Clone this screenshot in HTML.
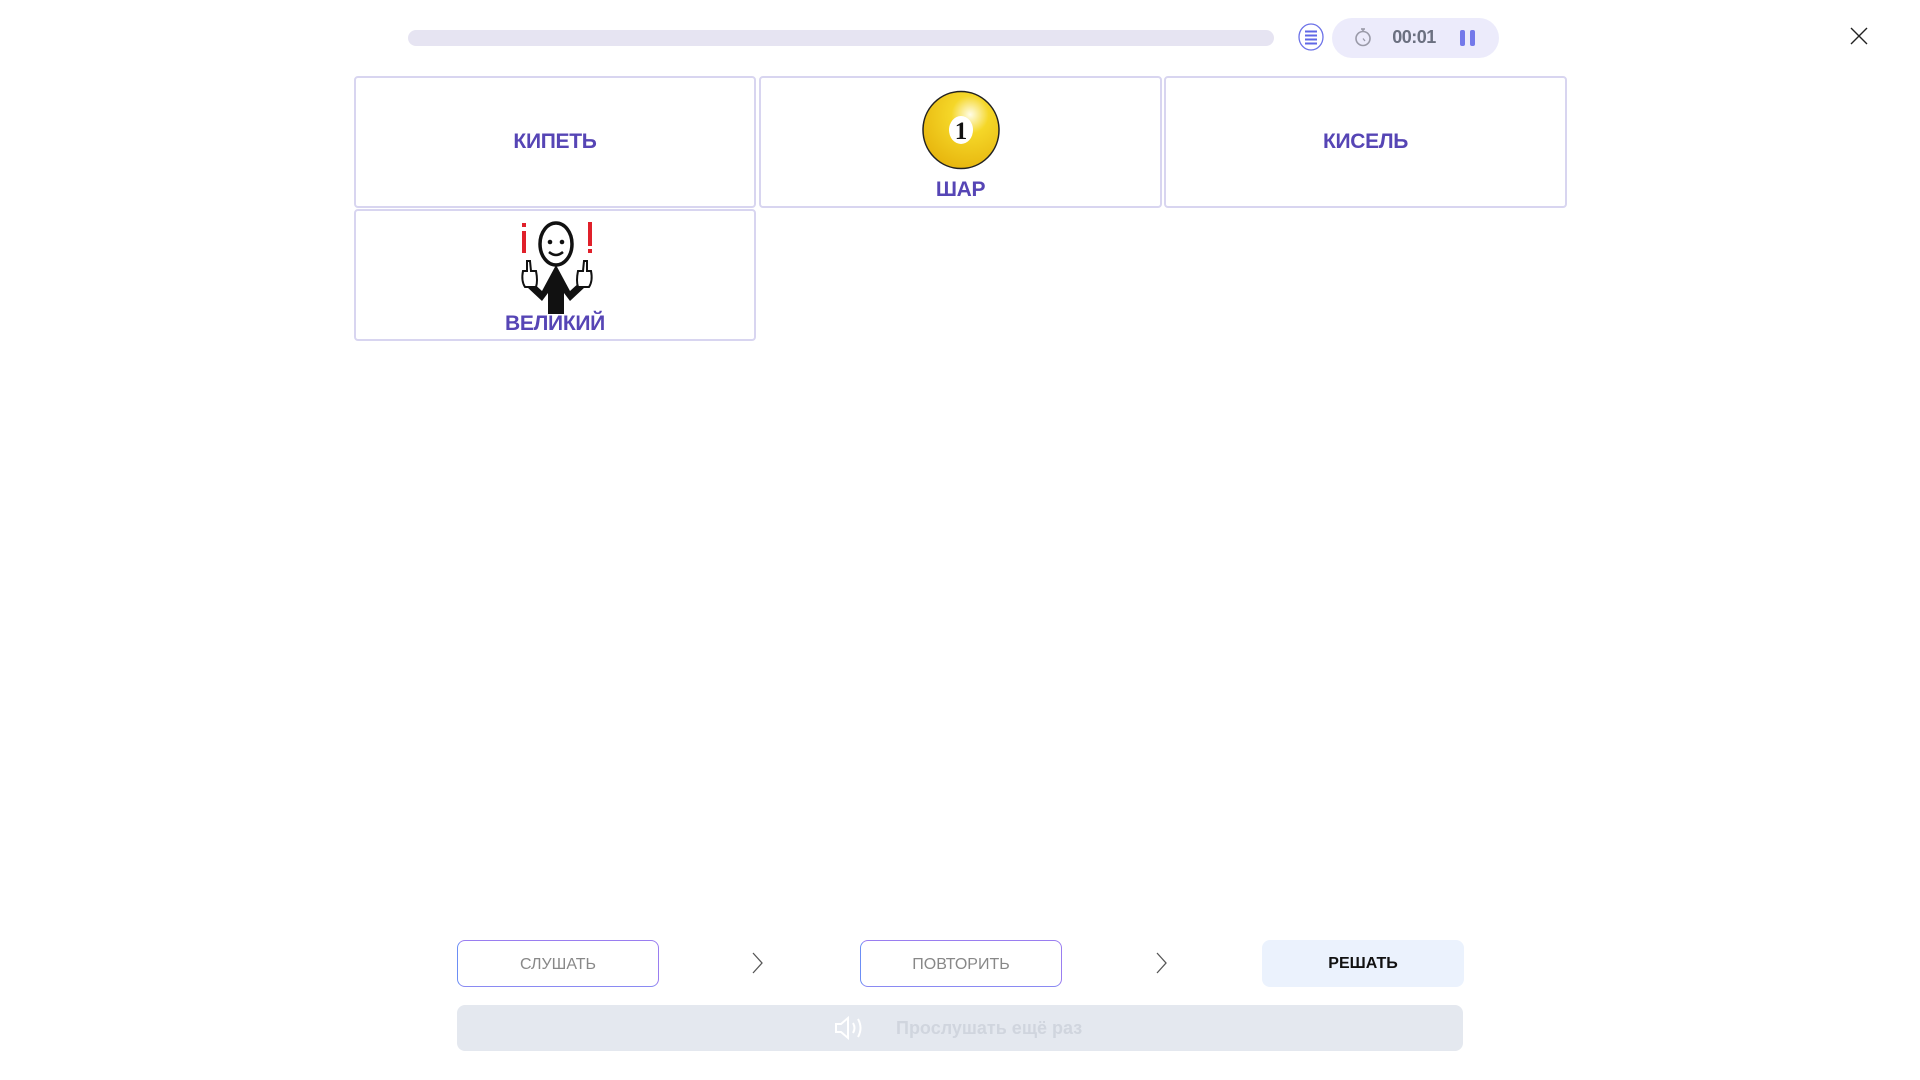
<!DOCTYPE html>
<html><head><meta charset="utf-8"><style>
*{margin:0;padding:0;box-sizing:border-box}
body{width:1920px;height:1080px;background:#fff;font-family:"Liberation Sans",sans-serif;position:relative;overflow:hidden}
.a{position:absolute}
.card{position:absolute;border:2px solid #d8d5f0;border-radius:4px;background:#fff}
.lbl{position:absolute;left:0;right:0;text-align:center;color:#5645b5;font-weight:bold;font-size:21px;letter-spacing:-0.3px}
.btn{position:absolute;top:940px;width:202px;height:47px;border-radius:8px;font-size:16px;color:#888;text-align:center;line-height:47px}
.gb{border:1.5px solid #9a7ef0;border-left-color:#6c8ef5;border-bottom-color:#8a8af2}
</style></head><body>
<div class="a" style="left:408px;top:30px;width:866px;height:16px;border-radius:8px;background:#e6e4f2"></div>
<svg class="a" style="left:1297px;top:23px" width="28" height="28" viewBox="0 0 28 28"><ellipse cx="14" cy="14" rx="12" ry="13" fill="#fff" stroke="#6c72e8" stroke-width="1.3"/><g stroke="#5f67e6" stroke-width="2"><line x1="8" y1="8.5" x2="20" y2="8.5"/><line x1="8" y1="12.5" x2="20" y2="12.5"/><line x1="8" y1="16.5" x2="20" y2="16.5"/><line x1="8" y1="20.5" x2="20" y2="20.5"/></g></svg>
<div class="a" style="left:1332px;top:18px;width:167px;height:40px;border-radius:20px;background:#ecebfb"></div>
<svg class="a" style="left:1353px;top:26px" width="20" height="22" viewBox="0 0 20 22"><circle cx="10" cy="12.5" r="7" fill="none" stroke="#9a9aa8" stroke-width="1.6"/><line x1="8" y1="3" x2="12" y2="3" stroke="#9a9aa8" stroke-width="1.6"/><line x1="10" y1="3" x2="10" y2="5.5" stroke="#9a9aa8" stroke-width="1.6"/><line x1="10" y1="12.5" x2="12" y2="15" stroke="#9a9aa8" stroke-width="1.3"/></svg>
<div class="a" style="left:1384px;top:26px;width:60px;text-align:center;font-size:18px;font-weight:bold;color:#6b7080;line-height:22px;letter-spacing:-0.5px">00:01</div>
<div class="a" style="left:1460px;top:30px;width:5px;height:16px;border-radius:2px;background:#7479ea"></div>
<div class="a" style="left:1470px;top:30px;width:5px;height:16px;border-radius:2px;background:#7479ea"></div>
<svg class="a" style="left:1850px;top:27px" width="18" height="18"><path d="M1 1L17 17M17 1L1 17" stroke="#222" stroke-width="1.4"/></svg>

<div class="card" style="left:354px;top:76px;width:402px;height:132px"><div class="lbl" style="top:52px">КИПЕТЬ</div></div>
<div class="card" style="left:759px;top:76px;width:403px;height:132px">
<svg class="a" style="left:159px;top:12px" width="82" height="80" viewBox="0 0 82 80"><defs><radialGradient id="g" cx="0.62" cy="0.3" r="0.7"><stop offset="0" stop-color="#fffde8"/><stop offset="0.35" stop-color="#f5d728"/><stop offset="1" stop-color="#e8b810"/></radialGradient></defs><ellipse cx="41" cy="40" rx="38" ry="38.5" fill="url(#g)" stroke="#222" stroke-width="1.5"/><ellipse cx="41" cy="40" rx="12" ry="14" fill="#fff"/><text x="41" y="49" text-anchor="middle" font-family="Liberation Serif" font-weight="bold" font-size="25" fill="#111">1</text></svg>
<div class="lbl" style="top:100px">ШАР</div></div>
<div class="card" style="left:1164px;top:76px;width:403px;height:132px"><div class="lbl" style="top:52px">КИСЕЛЬ</div></div>
<div class="card" style="left:354px;top:209px;width:402px;height:132px">
<svg class="a" style="left:158px;top:8px" width="86" height="95" viewBox="0 0 86 95"><rect x="8" y="12" width="4" height="22" fill="#e0202a"/><rect x="8" y="4" width="4" height="4" fill="#e0202a"/><rect x="74" y="3" width="4" height="24" fill="#e0202a"/><rect x="74" y="30" width="4" height="4" fill="#e0202a"/><ellipse cx="42" cy="25" rx="16" ry="21" fill="#fff" stroke="#111" stroke-width="3.5"/><circle cx="36" cy="23" r="2.3" fill="#111"/><circle cx="48" cy="23" r="2.3" fill="#111"/><path d="M35 33Q42 39 49 33" fill="none" stroke="#111" stroke-width="2.5"/><path d="M42 46L28 72L17 62L13 68L28 82L34 74L34 95L50 95L50 74L56 82L71 68L67 62L56 72Z" fill="#111"/><path d="M9 52Q7 62 11 68L22 68Q24 62 22 52L17 52L16 42L13 42L13 52Z" fill="#fff" stroke="#111" stroke-width="2"/><path d="M77 52Q79 62 75 68L64 68Q62 62 64 52L69 52L70 42L73 42L73 52Z" fill="#fff" stroke="#111" stroke-width="2"/></svg>
<div class="lbl" style="top:101px">ВЕЛИКИЙ</div></div>

<div class="btn gb" style="left:457px">СЛУШАТЬ</div>
<svg class="a" style="left:751px;top:951px" width="14" height="24"><path d="M2 2L11 12L2 22" fill="none" stroke="#555" stroke-width="1.3"/></svg>
<div class="btn gb" style="left:860px">ПОВТОРИТЬ</div>
<svg class="a" style="left:1155px;top:951px" width="14" height="24"><path d="M2 2L11 12L2 22" fill="none" stroke="#555" stroke-width="1.3"/></svg>
<div class="btn" style="left:1262px;background:#ebf2fd;color:#111;font-weight:bold">РЕШАТЬ</div>
<div class="a" style="left:457px;top:1005px;width:1006px;height:46px;border-radius:8px;background:#e4e8ef"></div>
<svg class="a" style="left:834px;top:1014px" width="32" height="28" viewBox="0 0 32 28"><path d="M2 10H7L14 4V24L7 18H2Z" fill="none" stroke="#fff" stroke-width="2"/><path d="M19 9Q22 14 19 19M24 5Q29 14 24 23" fill="none" stroke="#fff" stroke-width="2"/></svg>
<div class="a" style="left:896px;top:1016px;font-size:18px;font-weight:bold;color:#d0d5de;line-height:24px">Прослушать ещё раз</div>
</body></html>
